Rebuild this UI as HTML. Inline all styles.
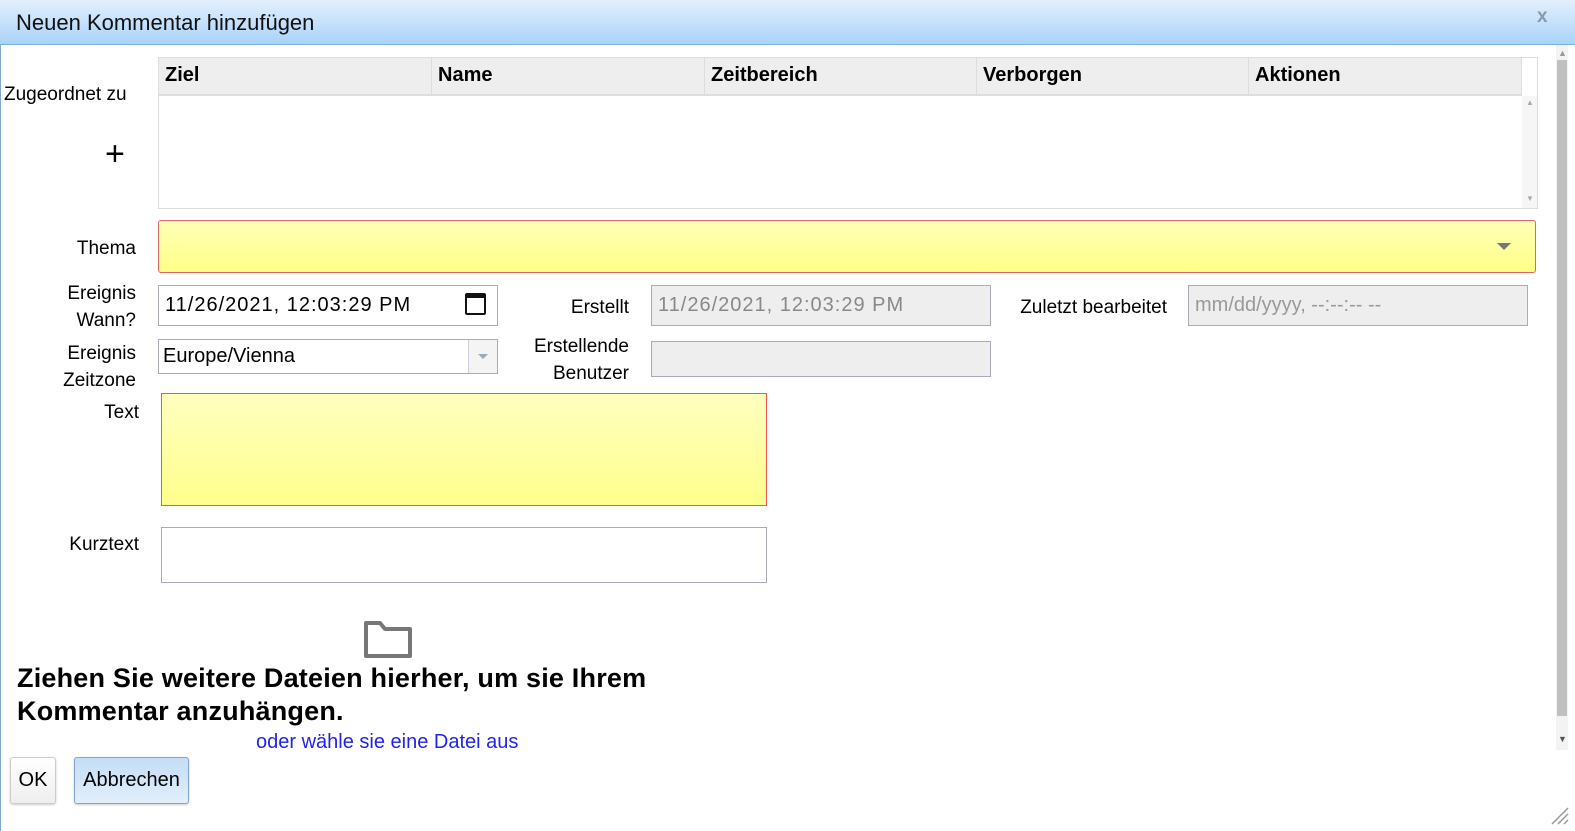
<!DOCTYPE html>
<html><head><meta charset="utf-8"><style>
*{box-sizing:border-box;margin:0;padding:0}
body{width:1575px;height:831px;overflow:hidden;background:#fff;font-family:"Liberation Sans",sans-serif;position:relative;color:#000}
.a{position:absolute}
.lbl{position:absolute;font-size:19px;text-align:right;line-height:27px}
.hdr{position:absolute;top:58px;height:37px;background:#eee;border-right:1px solid #ddd;font-weight:bold;font-size:20px;padding:6px 6px;}
.inp{position:absolute;border:1px solid #aab;font-size:20px;padding:8px 6px;color:#000}
</style></head><body>
<div class="a" style="left:0;top:0;width:1575px;height:45px;background:linear-gradient(#e3f0fd,#a9d3fa);border-bottom:1px solid #7fb0dd"></div>
<div class="a" style="left:16px;top:10px;font-size:22px;color:#111">Neuen Kommentar hinzufügen</div>
<div class="a" style="left:1537px;top:6px;font-size:19px;font-weight:bold;color:#8a9aa8">x</div>
<div class="a" style="left:0;top:45px;width:1px;height:786px;background:#7fa8cc"></div>
<div class="a" style="left:1556px;top:45px;width:12px;height:705px;background:#f3f3f3"></div>
<div class="a" style="left:1557px;top:60px;width:10px;height:656px;background:#c0c0c0"></div>
<div class="a" style="left:1558px;top:48px;font-size:9px;color:#999">▲</div>
<div class="a" style="left:1558px;top:734px;font-size:9px;color:#555">▼</div>

<div class="lbl" style="left:4px;top:81px;text-align:left">Zugeordnet zu</div>
<div class="a" style="left:105px;top:135px;font-size:34px;line-height:38px">+</div>
<div class="a" style="left:158px;top:57px;width:1380px;height:152px;border:1px solid #ddd"></div>
<div class="hdr" style="left:159px;width:273px">Ziel</div>
<div class="hdr" style="left:432px;width:273px">Name</div>
<div class="hdr" style="left:705px;width:272px">Zeitbereich</div>
<div class="hdr" style="left:977px;width:272px">Verborgen</div>
<div class="hdr" style="left:1249px;width:273px">Aktionen</div>
<div class="a" style="left:159px;top:94px;width:1363px;height:2px;background:#ddd"></div>
<div class="a" style="left:1522px;top:96px;width:15px;height:112px;background:#f6f6f6"></div>
<div class="a" style="left:1526px;top:98px;font-size:8px;color:#aaa">▲</div>
<div class="a" style="left:1526px;top:194px;font-size:8px;color:#aaa">▼</div>

<div class="lbl" style="left:0;top:235px;width:136px">Thema</div>
<div class="a" style="left:158px;top:220px;width:1378px;height:53px;border:1px solid #d66;border-radius:3px;background:linear-gradient(#ffffb8,#ffff88)"></div>
<div class="a" style="left:1497px;top:243px;width:0;height:0;border-left:7px solid transparent;border-right:7px solid transparent;border-top:7px solid #777"></div>

<div class="lbl" style="left:0;top:280px;width:136px">Ereignis<br>Wann?</div>
<div class="inp" style="left:158px;top:285px;width:340px;height:41px;letter-spacing:1px">11/26/2021, 12:03:29 PM</div>
<div class="a" style="left:465px;top:293px;width:21px;height:22px;border:2px solid #111;border-top-width:5px;border-radius:2px"></div>
<div class="lbl" style="left:530px;top:294px;width:99px">Erstellt</div>
<div class="inp" style="left:651px;top:285px;width:340px;height:41px;background:#eee;color:#888;letter-spacing:1px">11/26/2021, 12:03:29 PM</div>
<div class="lbl" style="left:990px;top:294px;width:177px">Zuletzt bearbeitet</div>
<div class="inp" style="left:1188px;top:285px;width:340px;height:41px;background:#eee;color:#999">mm/dd/yyyy, --:--:-- --</div>

<div class="lbl" style="left:0;top:340px;width:136px">Ereignis<br>Zeitzone</div>
<div class="inp" style="left:158px;top:339px;width:340px;height:35px;padding:5px 4px">Europe/Vienna</div>
<div class="a" style="left:468px;top:340px;width:29px;height:33px;border-left:1px solid #ccd;background:#f4f4f4"></div>
<div class="a" style="left:478px;top:354px;border-left:5px solid transparent;border-right:5px solid transparent;border-top:5px solid #9ab"></div>
<div class="lbl" style="left:500px;top:333px;width:129px">Erstellende<br>Benutzer</div>
<div class="inp" style="left:651px;top:341px;width:340px;height:36px;background:#eee"></div>

<div class="lbl" style="left:0;top:399px;width:139px">Text</div>
<div class="a" style="left:161px;top:393px;width:606px;height:113px;border:1px solid #e55;background:linear-gradient(#ffffc0,#ffff8c)"></div>
<div class="lbl" style="left:0;top:531px;width:139px">Kurztext</div>
<div class="inp" style="left:161px;top:527px;width:606px;height:56px"></div>

<svg class="a" style="left:363px;top:620px" width="50" height="40" viewBox="0 0 50 40"><path d="M3 3 H17 L22 9 H47 V36 H3 Z" fill="none" stroke="#777" stroke-width="4" stroke-linejoin="round"/></svg>
<div class="a" style="left:17px;top:662px;font-size:27px;font-weight:bold;line-height:33px;letter-spacing:0.2px">Ziehen Sie weitere Dateien hierher, um sie Ihrem<br>Kommentar anzuhängen.</div>
<div class="a" style="left:256px;top:731px;font-size:20px;color:#22e;height:19px;overflow:hidden">oder wähle sie eine Datei aus</div>

<div class="a" style="left:10px;top:757px;width:46px;height:47px;border:1px solid #ccc;border-radius:3px;background:linear-gradient(#fff,#eee);font-size:20px;text-align:center;line-height:45px;box-shadow:0 1px 2px #ccc">OK</div>
<div class="a" style="left:74px;top:757px;width:115px;height:47px;border:1px solid #7fa6cc;border-radius:3px;background:linear-gradient(#c4ddf6,#e2effb);font-size:20px;text-align:center;line-height:45px;box-shadow:0 1px 2px #ccc">Abbrechen</div>
<svg class="a" style="left:1550px;top:806px" width="20" height="20"><path d="M2 18 L18 2 M8 18 L18 8 M14 18 L18 14" stroke="#999" stroke-width="1.5"/></svg>
</body></html>
